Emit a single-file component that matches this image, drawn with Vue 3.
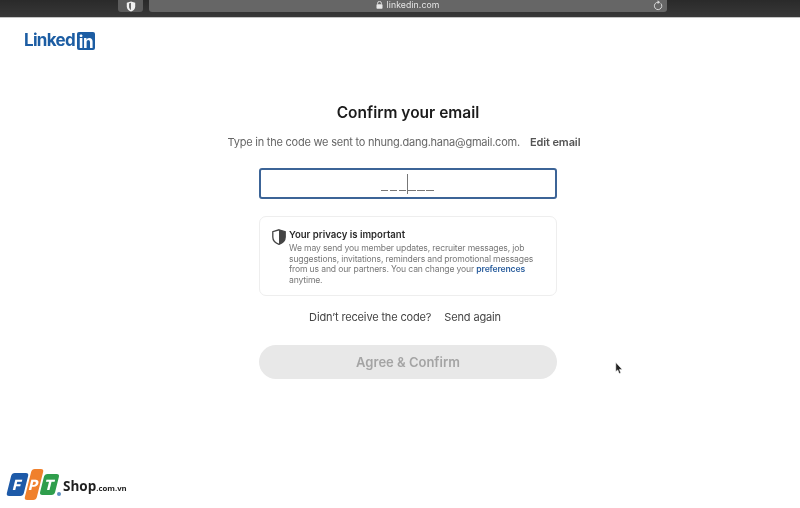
<script setup>
const lines = [
  'We may send you member updates, recruiter messages, job',
  'suggestions, invitations, reminders and promotional messages',
]
</script>

<template>
  <div class="page">
    <header class="chrome">
      <div class="shieldBtn">
        <svg width="10" height="11" viewBox="0 0 10 11">
          <path d="M5 .5 9.2 1.8V5.5C9.2 8 7.4 9.7 5 10.6 2.6 9.7.8 8 .8 5.5V1.8Z" fill="#f2f2f2" />
          <path d="M5 1.8 3 2.4V5.5C3 7.2 3.8 8.3 5 9Z" fill="#6a6a6a" />
        </svg>
      </div>
      <div class="urlBar">
        <span class="url">
          <svg width="7" height="8" viewBox="0 0 7 8">
            <path d="M1.6 3.4V2.3a1.9 1.9 0 0 1 3.8 0v1.1" fill="none" stroke="#e8e8e8" stroke-width=".9" />
            <rect x=".5" y="3.3" width="6" height="4.4" rx=".7" fill="#e8e8e8" />
          </svg>
          linkedin.com
        </span>
        <svg class="reload" width="10" height="11" viewBox="0 0 10 11">
          <path d="M7.8 3.4A3.7 3.7 0 1 1 5 2.2" fill="none" stroke="#d8d8d8" stroke-width="1" />
          <path d="M4.6.2 7.2 2.2 4.6 4Z" fill="#d8d8d8" />
        </svg>
      </div>
    </header>

    <div class="logo">
      <span class="logoWord">Linked</span>
      <span class="logoBox">in</span>
    </div>

    <main class="content">
      <h1>Confirm your email</h1>
      <p class="sub">
        <span>Type in the code we sent to nhung.dang.hana@gmail.com.</span>
        <b>Edit email</b>
      </p>

      <div class="codeInput">
        <span class="dash" v-for="n in 3" :key="'a' + n"></span>
        <span class="caret"></span>
        <span class="dash" v-for="n in 3" :key="'b' + n"></span>
      </div>

      <section class="privacy">
        <svg class="shield" width="14" height="16" viewBox="0 0 14 16">
          <path d="M7 .8 13.2 2.7V8C13.2 11.6 10.6 14 7 15.3 3.4 14 .8 11.6.8 8V2.7Z" fill="#fff" stroke="#444" stroke-width="1.3" />
          <path d="M7 .8 13.2 2.7V8C13.2 11.6 10.6 14 7 15.3Z" fill="#444" />
        </svg>
        <div>
          <h2>Your privacy is important</h2>
          <p>
            <span v-for="line in lines" :key="line" class="line">{{ line }}</span>
            <span class="line">from us and our partners. You can change your <a>preferences</a></span>
            <span class="line">anytime.</span>
          </p>
        </div>
      </section>

      <p class="resend">
        <span>Didn’t receive the code?</span>
        <span class="again">Send again</span>
      </p>

      <div class="agree">Agree &amp; Confirm</div>
    </main>

    <svg class="cursor" width="9" height="13" viewBox="0 0 9 13">
      <path d="M.8.5V9.6L2.8 7.9 4.2 11.6 5.8 11 4.4 7.4H7.2Z" fill="#222" stroke="#fff" stroke-width=".5" />
    </svg>

    <div class="fpt">
      <div class="fptMark">
        <span class="fptTile blue"><i>F</i></span>
        <span class="fptTile orange"><i>P</i></span>
        <span class="fptTile green"><i>T</i></span>
        <span class="fptDot"></span>
      </div>
      <span class="shop">Shop<small>.com.vn</small></span>
    </div>
  </div>
</template>

<style>
html, body {
  margin: 0;
  background: #fff;
}
</style>

<style scoped>
.page {
  position: relative;
  width: 800px;
  height: 508px;
  overflow: hidden;
  background: #fff;
  font-family: Inter, "Liberation Sans", sans-serif;
  filter: blur(0.35px);
}
.chrome {
  display: flex;
  gap: 6px;
  height: 18px;
  padding-left: 118px;
  padding-right: 133px;
  box-sizing: border-box;
  background: linear-gradient(#2a2a2a, #383838);
  border-bottom: 1px solid #c4c4c4;
}
.shieldBtn {
  width: 25px;
  height: 12px;
  background: #5c5c5c;
  border-radius: 0 0 3px 3px;
  display: flex;
  align-items: center;
  justify-content: center;
}
.urlBar {
  flex: 1;
  height: 12px;
  position: relative;
  background: #666;
  border-radius: 0 0 3px 3px;
  display: flex;
  align-items: center;
  justify-content: center;
}
.url {
  display: flex;
  align-items: center;
  gap: 3px;
  margin-top: -2px;
  font-size: 8.7px;
  color: #e6e6e6;
  letter-spacing: 0.1px;
}
.reload {
  position: absolute;
  right: 4px;
  top: 0;
}
.logo {
  display: flex;
  align-items: center;
  gap: 2px;
  margin: 13px 0 0 24px;
  height: 19px;
}
.logoWord {
  font-size: 17px;
  font-weight: 700;
  color: #1c5da3;
  letter-spacing: -0.7px;
  line-height: 19px;
}
.logoBox {
  width: 18px;
  height: 18px;
  border-radius: 2px;
  background: #1c5da3;
  color: #fff;
  font-size: 17px;
  font-weight: 700;
  line-height: 20px;
  text-align: center;
  letter-spacing: -0.5px;
}
.content {
  width: 360px;
  margin: 51px 0 0 228px;
  display: flex;
  flex-direction: column;
  align-items: center;
}
h1 {
  margin: 0;
  font-size: 15.5px;
  line-height: 24px;
  font-weight: 600;
  color: #1b1b1b;
}
.sub {
  margin: 9px 8px 0 0;
  display: flex;
  gap: 10px;
  font-size: 11px;
  letter-spacing: -0.23px;
  line-height: 16px;
  color: #666;
  white-space: nowrap;
}
.sub b {
  font-weight: 600;
  color: #555;
  letter-spacing: -0.1px;
}
.codeInput {
  margin-top: 18px;
  width: 298px;
  height: 31px;
  box-sizing: border-box;
  border: 2px solid #3c6497;
  border-radius: 3px;
  display: flex;
  justify-content: center;
  align-items: flex-end;
  gap: 1.5px;
  padding: 0 2px 6px 0;
}
.dash {
  width: 7.5px;
  height: 1px;
  background: #777;
}
.caret {
  width: 1px;
  height: 20px;
  margin: 0 -1px -3px;
  background: #777;
}
.privacy {
  margin-top: 17px;
  width: 298px;
  height: 80px;
  box-sizing: border-box;
  border: 1px solid #eee;
  border-radius: 7px;
  padding: 11px 12px;
  display: flex;
  gap: 3px;
}
.shield {
  margin-top: 1px;
  flex: none;
}
h2 {
  margin: 0;
  font-size: 9.6px;
  line-height: 13px;
  font-weight: 600;
  color: #2a2a2a;
}
.privacy p {
  margin: 2px 0 0;
  font-size: 8.6px;
  letter-spacing: -0.15px;
  line-height: 10.7px;
  color: #777;
}
.line {
  display: block;
  white-space: nowrap;
}
.privacy a {
  color: #2c5f9e;
  font-weight: 600;
}
.resend {
  margin: 13px 6px 0 0;
  display: flex;
  gap: 13px;
  font-size: 11px;
  letter-spacing: -0.15px;
  line-height: 16px;
  color: #444;
}
.agree {
  margin-top: 20px;
  width: 298px;
  height: 34px;
  border-radius: 17px;
  background: #e8e8e8;
  color: #a4a4a4;
  font-size: 13px;
  font-weight: 600;
  line-height: 34px;
  text-align: center;
}
.cursor {
  position: absolute;
  left: 615px;
  top: 362px;
}
.fpt {
  position: absolute;
  left: 9px;
  top: 469px;
  display: flex;
  align-items: center;
  gap: 6px;
}
.fptMark {
  position: relative;
  display: flex;
  align-items: center;
  gap: 2px;
  height: 31px;
}
.fptTile {
  height: 23px;
  transform: skewX(-14deg);
  border-radius: 3px;
  display: flex;
  align-items: center;
  justify-content: center;
  color: #fff;
  font-size: 14px;
  font-weight: 800;
}
.fptTile i {
  font-style: normal;
}
.blue { width: 17px; background: #1e5aa8; }
.orange { width: 12px; height: 31px; background: #f0802c; }
.green { width: 15px; height: 21px; background: #2f9e4c; }
.fptDot {
  position: absolute;
  right: -4px;
  bottom: 4px;
  width: 4px;
  height: 4px;
  border-radius: 50%;
  background: #5e8fc0;
}
.shop {
  font-family: "Open Sans", "Liberation Sans", sans-serif;
  font-size: 13.5px;
  font-weight: 700;
  color: #1f1f1f;
  margin-top: 3px;
}
.shop small {
  font-size: 7.8px;
}
</style>
